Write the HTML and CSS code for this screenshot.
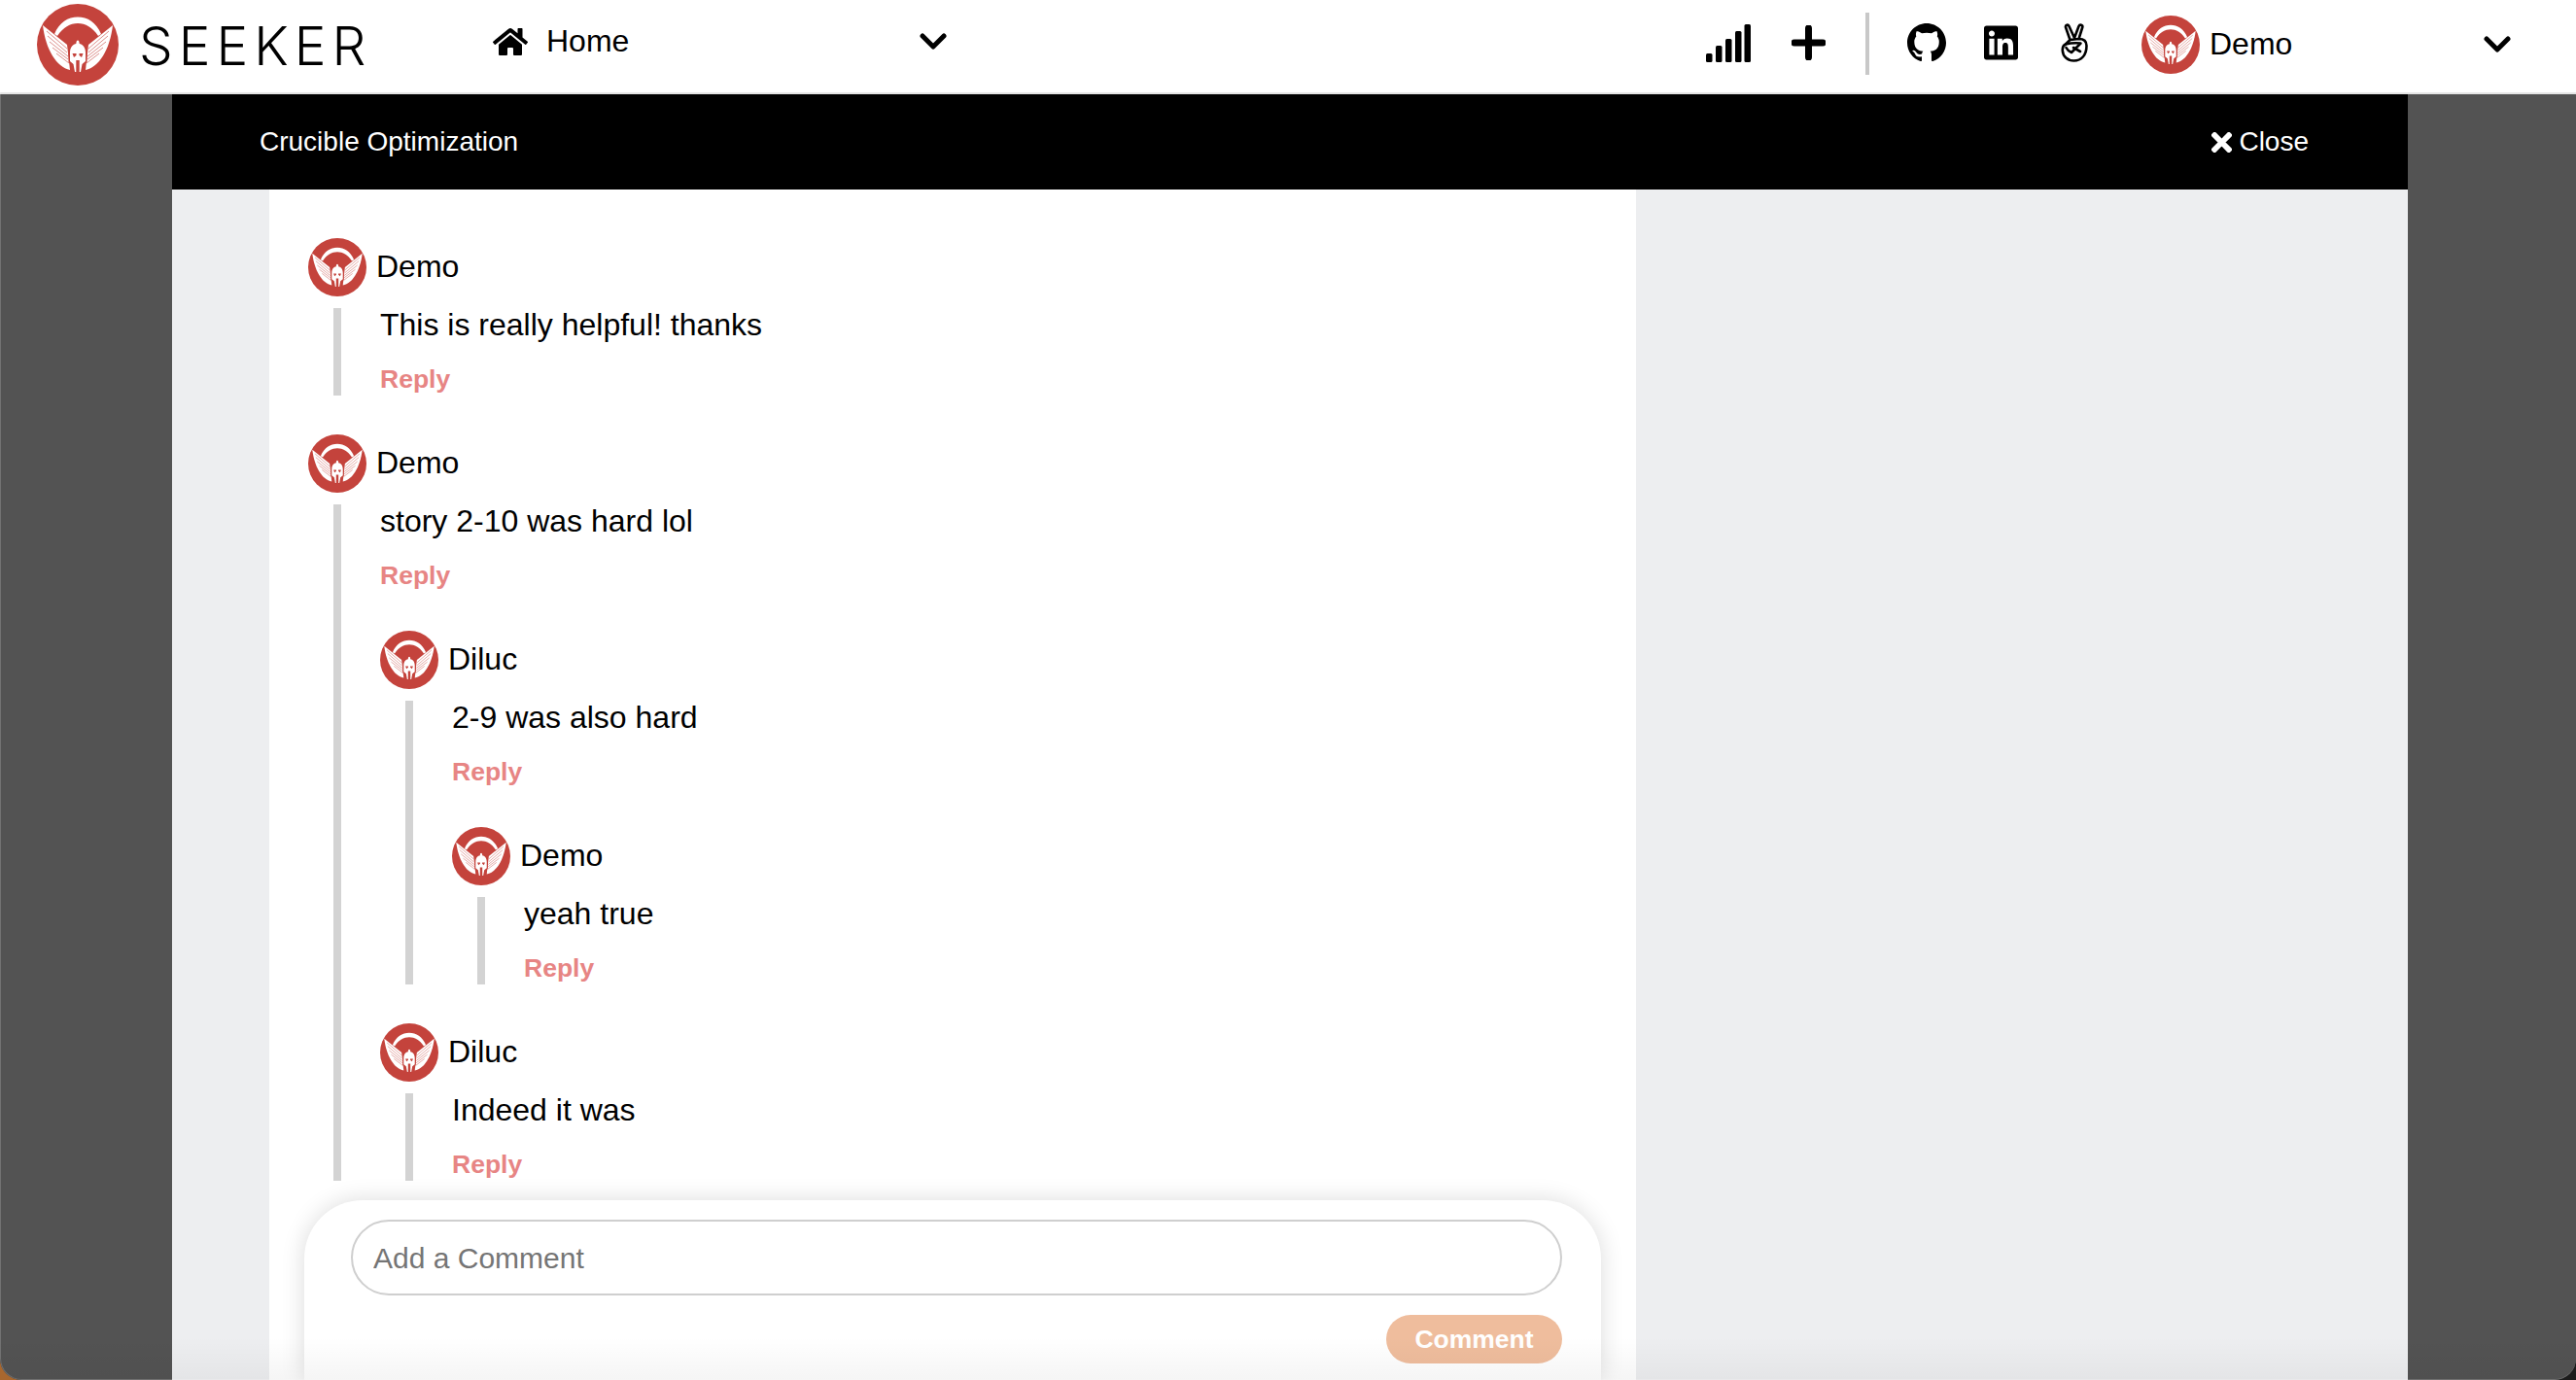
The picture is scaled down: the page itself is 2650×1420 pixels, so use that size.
FILE: index.html
```html
<!DOCTYPE html>
<html lang="en">
<head>
<meta charset="utf-8">
<title>Seeker</title>
<link rel="stylesheet" href="styles.css">
</head>
<body>
<svg class="defs" width="0" height="0" aria-hidden="true">
  <symbol id="emblem" viewBox="0 0 84 84">
    <circle cx="42" cy="42" r="42" fill="#c4433c"/>
    <path d="M18 31C23 19 32 13.500 42 13.500S61 19 66 31L63 33C57 24 50 20 42 20S27 24 21 33Z" fill="#fff"/>
    <g fill="#fff">
      <path d="M6 22L31 42L34 68C20 65 9 47 6 22Z"/>
      <path d="M78 22L53 42L50 68C64 65 75 47 78 22Z"/>
    </g>
    <g stroke="#c4433c" stroke-width=".6" fill="none">
      <path d="M10 28L31 46M11 33L31 50M13 39L32 54M16 45L32 57M20 51L33 61"/>
      <path d="M74 28L53 46M73 33L53 50M71 39L52 54M68 45L52 57M64 51L51 61"/>
    </g>
    <path d="M32.500 50C32.500 43 37 40 39.800 39.500C40 37 41 36 42 36S44 37 44.200 39.500C47 40 51.500 43 51.500 50V60L47.500 63L45.500 71H38.500L36.500 63L32.500 60Z" fill="#c4433c"/>
    <path d="M34 50C34 44 37.500 41.500 40.300 41C40.500 38.500 41 37.500 42 37.500S43.500 38.500 43.700 41C46.500 41.500 50 44 50 50V59L46.500 62L45 70H43.700V58H40.300V70H39L37.500 62L34 59Z" fill="#fff"/>
    <path d="M36.500 51H40.500V53L38 55ZM47.500 51H43.500V53L46 55Z" fill="#c4433c"/>
  </symbol>
</svg>
<div class="window">
  <header class="topbar">
    <svg class="logo"><use href="#emblem"/></svg>
    <span class="wordmark">SEEKER</span>
    <div class="nav-select">
      <svg class="home-icon" viewBox="0 0 576 512"><path d="M280.37 148.26L96 300.11V464a16 16 0 0 0 16 16l112.06-.29a16 16 0 0 0 15.92-16V368a16 16 0 0 1 16-16h64a16 16 0 0 1 16 16v95.64a16 16 0 0 0 16 16.05L464 480a16 16 0 0 0 16-16V300L295.67 148.26a12.19 12.19 0 0 0-15.3 0zM571.6 251.47L488 182.56V44.05a12 12 0 0 0-12-12h-56a12 12 0 0 0-12 12v72.61L318.47 43a48 48 0 0 0-61 0L4.34 251.47a12 12 0 0 0-1.6 16.9l25.5 31A12 12 0 0 0 45.15 301l235.22-193.74a12.19 12.19 0 0 1 15.3 0L530.9 301a12 12 0 0 0 16.9-1.6l25.5-31a12 12 0 0 0-1.7-16.93z"/></svg>
      <span class="nav-label">Home</span>
      <svg class="chevron" viewBox="0 0 28 17"><path d="M3 3L14 14L25 3" /></svg>
    </div>
    <div class="actions">
      <svg class="signal" viewBox="0 0 46 39"><rect x="0" y="30" width="6.5" height="9" rx="1.5"/><rect x="10" y="22" width="6.5" height="17" rx="1.5"/><rect x="20" y="15" width="6.5" height="24" rx="1.5"/><rect x="30" y="7" width="6.5" height="32" rx="1.5"/><rect x="39.5" y="0" width="6.5" height="39" rx="1.5"/></svg>
      <svg class="plus" viewBox="0 0 35 36"><path d="M17.5 3V33M3 18H32"/></svg>
      <span class="divider"></span>
      <svg class="github" viewBox="0 0 16 16"><path d="M8 0C3.58 0 0 3.58 0 8c0 3.54 2.29 6.53 5.47 7.59.4.07.55-.17.55-.38 0-.19-.01-.82-.01-1.49-2.01.37-2.53-.49-2.69-.94-.09-.23-.48-.94-.82-1.13-.28-.15-.68-.52-.01-.53.63-.01 1.08.58 1.23.82.72 1.21 1.87.87 2.33.66.07-.52.28-.87.51-1.07-1.78-.2-3.64-.89-3.64-3.95 0-.87.31-1.59.82-2.15-.08-.2-.36-1.02.08-2.12 0 0 .67-.21 2.2.82.64-.18 1.32-.27 2-.27.68 0 1.36.09 2 .27 1.53-1.04 2.2-.82 2.2-.82.44 1.1.16 1.92.08 2.12.51.56.82 1.27.82 2.15 0 3.07-1.87 3.75-3.65 3.95.29.25.54.73.54 1.48 0 1.07-.01 1.93-.01 2.2 0 .21.15.46.55.38A8.013 8.013 0 0016 8c0-4.42-3.58-8-8-8z"/></svg>
      <svg class="linkedin" viewBox="0 32 448 448"><path d="M416 32H31.9C14.3 32 0 46.5 0 64.3v383.4C0 465.5 14.3 480 31.9 480H416c17.6 0 32-14.5 32-32.3V64.3c0-17.8-14.4-32.3-32-32.3zM135.4 416H69V202.2h66.5V416zm-33.2-243c-21.3 0-38.5-17.3-38.5-38.5S80.9 96 102.2 96c21.2 0 38.5 17.3 38.5 38.5 0 21.3-17.2 38.5-38.5 38.5zm282.1 243h-66.4V312c0-24.8-.5-56.7-34.5-56.7-34.6 0-39.9 27-39.9 54.9V416h-66.4V202.2h63.7v29.2h.9c8.9-16.8 30.6-34.5 62.9-34.5 67.2 0 79.7 44.3 79.7 101.9V416z"/></svg>
      <svg class="angel" viewBox="0 0 28 40"><path d="M9.500 17L5 4C4.500 1.500 7.500 .8 8.500 3L14 15L18.500 3C19.500 .8 23 1.600 22.300 4L18.500 16C23.500 16 26.500 18.500 26.500 23C26.500 33 21 38.500 13.500 38.500C7 38.500 2 34 1.800 28C1.600 25 2.500 22.500 5 21.500L9.500 17L18.500 16"/><path d="M5 21.500C9 20.500 15 20 20.500 20.500L11 30C8.500 29 6.500 27 5.500 25M13 25L20 29"/></svg>
      <svg class="avatar avatar-user"><use href="#emblem"/></svg>
      <span class="user-name">Demo</span>
      <svg class="chevron chevron-user" viewBox="0 0 28 17"><path d="M3 3L14 14L25 3" /></svg>
    </div>
  </header>

  <main class="backdrop">
    <section class="modal">
      <div class="modal-head">
        <span class="modal-title">Crucible Optimization</span>
        <span class="close"><svg class="close-icon" viewBox="0 0 20 20"><path d="M3 3L17 17M17 3L3 17"/></svg>Close</span>
      </div>
      <div class="modal-body">
        <div class="panel">
          <div class="comments">
            <article class="comment">
              <div class="comment-head"><svg class="avatar"><use href="#emblem"/></svg><span class="comment-name">Demo</span></div>
              <div class="thread">
                <p class="comment-text">This is really helpful! thanks</p>
                <a class="reply">Reply</a>
              </div>
            </article>
            <article class="comment">
              <div class="comment-head"><svg class="avatar"><use href="#emblem"/></svg><span class="comment-name">Demo</span></div>
              <div class="thread">
                <p class="comment-text">story 2-10 was hard lol</p>
                <a class="reply">Reply</a>
                <article class="comment">
                  <div class="comment-head"><svg class="avatar"><use href="#emblem"/></svg><span class="comment-name">Diluc</span></div>
                  <div class="thread">
                    <p class="comment-text">2-9 was also hard</p>
                    <a class="reply">Reply</a>
                    <article class="comment">
                      <div class="comment-head"><svg class="avatar"><use href="#emblem"/></svg><span class="comment-name">Demo</span></div>
                      <div class="thread">
                        <p class="comment-text">yeah true</p>
                        <a class="reply">Reply</a>
                      </div>
                    </article>
                  </div>
                </article>
                <article class="comment">
                  <div class="comment-head"><svg class="avatar"><use href="#emblem"/></svg><span class="comment-name">Diluc</span></div>
                  <div class="thread">
                    <p class="comment-text">Indeed it was</p>
                    <a class="reply">Reply</a>
                  </div>
                </article>
              </div>
            </article>
          </div>
          <form class="composer">
            <input class="composer-input" type="text" placeholder="Add a Comment">
            <div class="composer-actions"><button class="composer-btn" type="button">Comment</button></div>
          </form>
        </div>
      </div>
    </section>
  </main>
  <div class="bottom-fade"></div>
</div>
</body>
</html>
```

FILE: styles.css
```css
* { box-sizing: border-box; }
html, body { margin: 0; height: 100%; }
body {
  background: linear-gradient(90deg, #a8672f 50%, #1c1c1c 50%);
  font-family: "Liberation Sans", Arial, sans-serif;
  color: #000;
  overflow: hidden;
}
.defs { position: absolute; }
.window {
  position: relative;
  height: 1420px;
  display: flex;
  flex-direction: column;
  border-radius: 0 0 22px 22px;
  overflow: hidden;
  background: #535353;
}
.window::after {
  content: "";
  position: absolute;
  inset: 0;
  border-left: 1px solid rgba(255, 255, 255, .18);
  border-bottom: 1px solid rgba(255, 255, 255, .18);
  border-radius: 0 0 22px 22px;
  pointer-events: none;
}
.topbar {
  flex: none;
  height: 97px;
  display: flex;
  align-items: center;
  background: #fff;
  border-bottom: 2px solid #e5e5e5;
  padding-left: 38px;
}
.logo { width: 84px; height: 84px; flex: none; margin-top: -4px; }
.wordmark {
  margin-left: 21px;
  width: 239px;
  font-family: Inter, "Liberation Sans", sans-serif;
  font-weight: 350;
  font-size: 55px;
  line-height: 60px;
  letter-spacing: 6px;
  position: relative;
  top: -1px;
}
.nav-select {
  margin-left: 125px;
  width: 467px;
  display: flex;
  align-items: center;
  position: relative;
  top: -5px;
}
.home-icon { width: 36px; height: 32px; flex: none; }
.nav-label { margin-left: 19px; font-size: 32px; flex: 1; }
.chevron { width: 28px; height: 17px; flex: none; fill: none; stroke: #000; stroke-width: 5; stroke-linecap: round; stroke-linejoin: round; }
.actions {
  margin-left: auto;
  display: flex;
  align-items: center;
  padding-right: 67px;
}
.signal { width: 46px; height: 39px; flex: none; margin-top: -7px; }
.plus { width: 35px; height: 36px; margin-left: 42px; margin-top: -7px; fill: none; stroke: #000; stroke-width: 7; stroke-linecap: round; flex: none; }
.divider { width: 4px; height: 64px; margin: -5px 0 0 41px; background: #c8c8c8; flex: none; }
.github { width: 40px; height: 40px; margin-left: 39px; margin-top: -7px; flex: none; }
.linkedin { width: 35px; height: 36px; margin-left: 39px; margin-top: -7px; flex: none; }
.angel { width: 28px; height: 40px; margin-left: 44px; margin-top: -7px; flex: none; fill: none; stroke: #000; stroke-width: 2.6; stroke-linejoin: round; stroke-linecap: round; }
.avatar { width: 60px; height: 60px; flex: none; display: block; }
.avatar-user { margin-left: 55px; margin-top: -4px; }
.user-name { width: 282px; margin-left: 10px; font-size: 32px; margin-top: -5px; }
.chevron-user { margin-top: -5px; }
.backdrop {
  flex: 1;
  min-height: 0;
  background: #535353;
  padding: 0 173px 0 177px;
  display: flex;
}
.modal {
  flex: 1;
  display: flex;
  flex-direction: column;
  background: #edeef0;
}
.modal-head {
  flex: none;
  height: 98px;
  background: #000;
  color: #fff;
  display: flex;
  align-items: center;
  justify-content: space-between;
  padding: 0 102px 0 90px;
  font-size: 28px;
}
.close { display: flex; align-items: center; }
.close-icon { width: 21px; height: 21px; margin-left: 2px; margin-right: 7px; fill: none; stroke: #fff; stroke-width: 5.5; stroke-linecap: square; }
.modal-body { flex: 1; min-height: 0; padding-left: 100px; }
.panel {
  width: 1406px;
  height: 100%;
  background: #fff;
  padding: 0 36px 0 36px;
  display: flex;
  flex-direction: column;
}
.comments {
  flex: none;
  height: 1040px;
  padding: 50px 0 0 4px;
  overflow: hidden;
}
.comment + .comment,
.reply + .comment,
.thread .comment { margin-top: 40px; }
.comment:first-child { margin-top: 0; }
.comment-head { display: flex; align-items: center; height: 60px; margin-bottom: 12px; }
.comment-name { margin-left: 10px; font-size: 32px; line-height: 36px; position: relative; top: -1px; }
.thread {
  margin-left: 26px;
  border-left: 8px solid #d3d3d3;
  padding-left: 40px;
}
.comment-text { margin: 0; font-size: 32px; line-height: 34px; }
.reply {
  display: block;
  margin-top: 24px;
  padding-bottom: 2px;
  color: #e78584;
  font-size: 26.5px;
  font-weight: 700;
  line-height: 30px;
}
.composer {
  flex: 1;
  width: 1334px;
  background: #fff;
  border-radius: 60px 60px 0 0;
  box-shadow: 0 0 24px rgba(0, 0, 0, .14);
  padding: 20px 40px 0 48px;
}
.composer-input {
  display: block;
  width: 100%;
  height: 78px;
  border: 2px solid #cfcfcf;
  border-radius: 40px;
  padding: 2px 21px 0;
  font: 30px "Liberation Sans", Arial, sans-serif;
  background: #fff;
  outline: none;
}
.composer-input::placeholder { color: #757575; opacity: 1; }
.composer-actions { display: flex; justify-content: flex-end; margin-top: 20px; }
.composer-btn {
  width: 181px;
  height: 50px;
  border: 0;
  border-radius: 25px;
  background: #efbd9d;
  color: #fff;
  font: 700 26.5px "Liberation Sans", Arial, sans-serif;
  padding: 0;
}
.bottom-fade {
  position: absolute;
  left: 0;
  right: 0;
  bottom: 0;
  height: 44px;
  background: linear-gradient(rgba(0, 0, 0, 0), rgba(0, 0, 0, .04));
  pointer-events: none;
}
```
